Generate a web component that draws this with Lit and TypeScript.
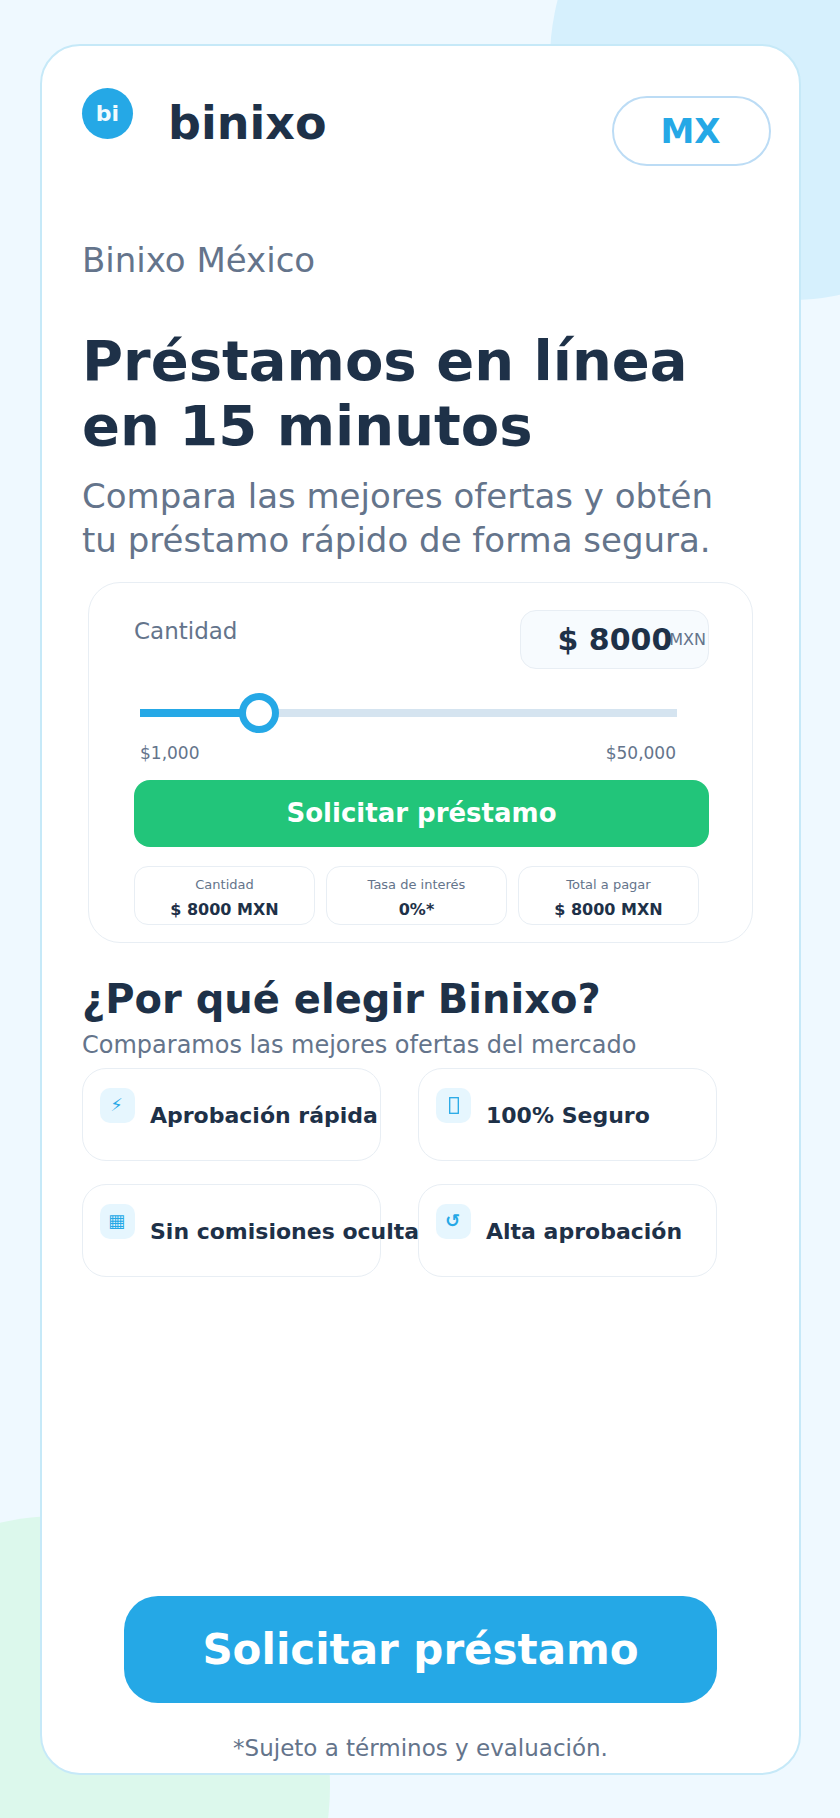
import { LitElement, html, css } from "lit";
import { customElement } from "lit/decorators.js";

const summary = [
  { label: "Cantidad", value: "$ 8000 MXN" },
  { label: "Tasa de interés", value: "0%*" },
  { label: "Total a pagar", value: "$ 8000 MXN" },
];

// the second icon is the empty "missing glyph" box of the reference
const missingGlyph = html`<svg class="tofu" width="10" height="17" viewBox="0 0 10 17">
  <rect x="0.7" y="0.7" width="8.6" height="15.6" fill="none" stroke="currentColor" stroke-width="1.3" />
</svg>`;

const features = [
  { icon: "⚡", text: "Aprobación rápida" },
  { icon: missingGlyph, text: "100% Seguro" },
  { icon: "▦", text: "Sin comisiones ocultas" },
  { icon: "↺", text: "Alta aprobación" },
];

@customElement("app-root")
export class AppRoot extends LitElement {
  static styles = css`
    :host {
      display: block;
      font-family: "DejaVu Sans", sans-serif;
      color: #1e3148;
    }

    .page {
      position: relative;
      height: 1818px;
      box-sizing: border-box;
      padding: 44px 39px 43px 40px;
      overflow: hidden;
      background: #eff9ff;
    }

    .blob {
      position: absolute;
      border-radius: 50%;
    }

    .blob.blue {
      left: 550px;
      top: -180px;
      width: 480px;
      height: 480px;
      background: #d6f0fd;
    }

    .blob.green {
      left: -210px;
      top: 1516px;
      width: 540px;
      height: 540px;
      background: #dcf8ec;
    }

    .card {
      position: relative;
      box-sizing: border-box;
      height: 100%;
      display: flex;
      flex-direction: column;
      padding: 42px 28px 0 40px;
      background: #fff;
      border: 2px solid #c6e9f8;
      border-radius: 40px;
    }

    .top {
      display: flex;
      justify-content: space-between;
      align-items: flex-start;
    }

    .brand {
      display: flex;
      align-items: flex-start;
      gap: 35px;
    }

    .logo {
      display: flex;
      align-items: center;
      justify-content: center;
      width: 51px;
      height: 51px;
      border-radius: 50%;
      background: #25a8e6;
      color: #f0fafe;
      font-size: 22px;
      font-weight: 700;
    }

    .name {
      font-size: 46px;
      font-weight: 700;
      line-height: 54px;
      margin-top: 8px;
    }

    .country {
      box-sizing: border-box;
      width: 159px;
      height: 70px;
      margin-top: 8px;
      padding-right: 2px;
      display: flex;
      align-items: center;
      justify-content: center;
      border: 2px solid #bcdcf5;
      border-radius: 35px;
      color: #25a8e6;
      font-size: 34px;
      font-weight: 700;
    }

    .kicker {
      margin-top: 74px;
      font-size: 34px;
      line-height: 40px;
      color: #64748b;
    }

    h1 {
      margin: 48px 0 0;
      font-size: 56px;
      font-weight: 700;
      line-height: 65px;
    }

    .lead {
      margin: 16px 0 0;
      font-size: 34px;
      line-height: 44px;
      color: #64748b;
    }

    .calc {
      box-sizing: border-box;
      width: 665px;
      height: 361px;
      margin: 20px 0 0 6px;
      padding: 27px 43px 0 45px;
      border: 1px solid #e8eef4;
      border-radius: 32px;
    }

    .amount {
      display: flex;
      justify-content: space-between;
      align-items: flex-start;
    }

    .amount-label {
      margin-top: 7px;
      font-size: 23px;
      line-height: 28px;
      color: #64748b;
    }

    .amount-box {
      box-sizing: border-box;
      width: 189px;
      height: 59px;
      display: flex;
      align-items: center;
      justify-content: flex-end;
      padding-right: 2px;
      background: #f7fbfe;
      border: 1px solid #e8eef4;
      border-radius: 16px;
    }

    .amount-value {
      font-size: 30px;
      font-weight: 700;
    }

    .amount-unit {
      margin-left: -3px;
      font-size: 16px;
      color: #64748b;
    }

    .slider {
      position: relative;
      height: 8px;
      margin: 40px 32px 0 6px;
      background: #d5e4f0;
    }

    .slider-fill {
      height: 100%;
      background: #25a8e6;
    }

    .slider-thumb {
      position: absolute;
      top: -16px;
      box-sizing: border-box;
      width: 40px;
      height: 40px;
      background: #fff;
      border: 7px solid #25a8e6;
      border-radius: 50%;
    }

    .range {
      display: flex;
      justify-content: space-between;
      margin: 26px 33px 0 6px;
      font-size: 17px;
      line-height: 20px;
      color: #64748b;
    }

    .apply {
      display: flex;
      align-items: center;
      justify-content: center;
      height: 67px;
      margin-top: 17px;
      padding-bottom: 1px;
      box-sizing: border-box;
      background: #22c57a;
      border-radius: 16px;
      color: #fff;
      font-size: 26px;
      font-weight: 700;
    }

    .summary {
      display: grid;
      grid-template-columns: repeat(3, 181px);
      gap: 11px;
      margin-top: 19px;
    }

    .summary-item {
      box-sizing: border-box;
      height: 59px;
      padding-top: 10px;
      text-align: center;
      border: 1px solid #e8eef4;
      border-radius: 14px;
    }

    .summary-label {
      font-size: 13px;
      line-height: 16px;
      color: #64748b;
    }

    .summary-value {
      margin-top: 7px;
      font-size: 16px;
      font-weight: 700;
      line-height: 19px;
    }

    h2 {
      margin: 33px 0 0;
      font-size: 40px;
      font-weight: 700;
      line-height: 46px;
    }

    .why {
      margin: 8px 0 0;
      font-size: 24px;
      line-height: 30px;
      color: #64748b;
    }

    .features {
      display: grid;
      grid-template-columns: repeat(2, 299px);
      gap: 23px 37px;
      margin-top: 8px;
    }

    .feature {
      isolation: isolate;
      box-sizing: border-box;
      height: 93px;
      display: flex;
      gap: 15px;
      padding: 19px 17px;
      background: #fff;
      border: 1px solid #e8eef4;
      border-radius: 24px;
      white-space: nowrap;
    }

    .feature-icon {
      flex: none;
      display: flex;
      align-items: center;
      justify-content: center;
      width: 35px;
      height: 35px;
      padding: 0 2px 1px 0;
      box-sizing: border-box;
      background: #e6f6fe;
      border-radius: 10px;
      color: #25a8e6;
      font-size: 18px;
      font-weight: 700;
      line-height: 22px;
    }

    .tofu {
      display: block;
      margin-left: 2px;
    }

    .feature-text {
      margin-top: 14px;
      font-size: 22px;
      font-weight: 700;
      line-height: 28px;
    }

    .cta {
      display: flex;
      align-items: center;
      justify-content: center;
      height: 107px;
      margin: auto 54px 0 42px;
      background: #25a8e6;
      border-radius: 34px;
      color: #fff;
      font-size: 42px;
      font-weight: 700;
    }

    .note {
      margin: 31px 54px 11px 42px;
      text-align: center;
      font-size: 23px;
      line-height: 28px;
      color: #64748b;
    }
  `;

  render() {
    return html`
      <div class="page">
        <div class="blob blue"></div>
        <div class="blob green"></div>
        <main class="card">
          <header class="top">
            <div class="brand">
              <div class="logo">bi</div>
              <div class="name">binixo</div>
            </div>
            <div class="country">MX</div>
          </header>

          <div class="kicker">Binixo México</div>
          <h1>Préstamos en línea<br />en 15 minutos</h1>
          <p class="lead">Compara las mejores ofertas y obtén<br />tu préstamo rápido de forma segura.</p>

          <section class="calc">
            <div class="amount">
              <div class="amount-label">Cantidad</div>
              <div class="amount-box">
                <span class="amount-value">$ 8000</span><span class="amount-unit">MXN</span>
              </div>
            </div>
            <div class="slider">
              <div class="slider-fill" style="width: ${((8000 - 1000) / 49000) * 100 + 6}%"></div>
              <div class="slider-thumb" style="left: 99px"></div>
            </div>
            <div class="range"><span>$1,000</span><span>$50,000</span></div>
            <div class="apply">Solicitar préstamo</div>
            <div class="summary">
              ${summary.map(
                (s) => html`
                  <div class="summary-item">
                    <div class="summary-label">${s.label}</div>
                    <div class="summary-value">${s.value}</div>
                  </div>
                `
              )}
            </div>
          </section>

          <h2>¿Por qué elegir Binixo?</h2>
          <p class="why">Comparamos las mejores ofertas del mercado</p>
          <section class="features">
            ${features.map(
              (f) => html`
                <div class="feature">
                  <div class="feature-icon">${f.icon}</div>
                  <div class="feature-text">${f.text}</div>
                </div>
              `
            )}
          </section>

          <div class="cta">Solicitar préstamo</div>
          <div class="note">*Sujeto a términos y evaluación.</div>
        </main>
      </div>
    `;
  }
}
